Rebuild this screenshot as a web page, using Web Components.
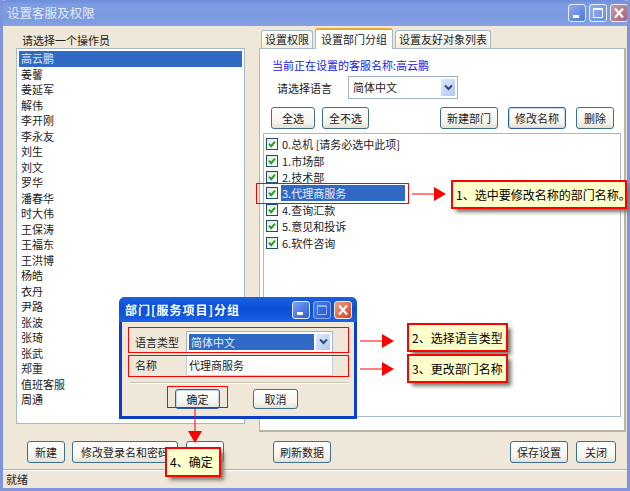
<!DOCTYPE html>
<html lang="zh">
<head>
<meta charset="utf-8">
<title>设置客服及权限</title>
<style>
  html, body { margin: 0; padding: 0; background: #efe7d8; }
  body { font: 11px/16px "Noto Sans CJK SC", "Liberation Sans", sans-serif; color: #222; }
</style>
</head>
<body>
<template id="caption-tpl">
  <style>
    :host { display: flex; align-items: center; box-sizing: border-box; height: 26px; }
    .title { flex: 1; white-space: nowrap; }
    .btns { display: flex; gap: 3px; }
    .b { box-sizing: border-box; width: 18px; height: 18px; border: 1px solid #e8eefb; border-radius: 3px; position: relative; display: block; }
    svg { display: block; width: 16px; height: 16px; }
  </style>
  <span class="title"><slot></slot></span>
  <span class="btns">
    <span class="b min"><svg viewBox="0 0 16 16"><rect x="4" y="10" width="6" height="3" fill="#fff"/></svg></span>
    <span class="b max"><svg viewBox="0 0 16 16"><path d="M3.5 3.5h9v9h-9zM3.5 4.5h9" fill="none" stroke="#fff" stroke-width="1"/></svg></span>
    <span class="b close"><svg viewBox="0 0 16 16"><path d="M4 3.5l8 9M12 3.5l-8 9" fill="none" stroke="#fff" stroke-width="2.2"/></svg></span>
  </span>
</template>

<script>
const define = (name, html) => {
  customElements.define(name, class extends HTMLElement {
    constructor() {
      super();
      this.attachShadow({ mode: 'open' }).innerHTML = html;
    }
  });
};

customElements.define('xp-caption', class extends HTMLElement {
  constructor() {
    super();
    this.attachShadow({ mode: 'open' });
    this.shadowRoot.appendChild(document.getElementById('caption-tpl').content.cloneNode(true));
  }
  connectedCallback() {
    const s = document.createElement('style');
    const small = this.hasAttribute('dialog');
    s.textContent = small
      ? `:host{background:linear-gradient(#1a5fe0,#0a4fd4 50%,#1c62e4);color:#fff;font-weight:bold;font-size:12px;letter-spacing:1px;padding:0 5px 0 6px;height:25px}
         .b{background:linear-gradient(135deg,#7fa2ee,#2a5bd8)}
         .max{opacity:.55}
         .close{background:linear-gradient(135deg,#f0a080,#d8401c)}`
      : `:host{background:linear-gradient(#6e8edc,#7f9de3 20%,#7c9ae0 70%,#86a1e4);color:#e4eaf7;font-size:12.5px;padding:0 2px 0 7px}
         .b{background:linear-gradient(135deg,#8fa9ec,#4f78d8)}
         .max{background:linear-gradient(135deg,#93abea,#6d8fe0)}
         .close{background:linear-gradient(135deg,#c79aa8,#a8607a)}`;
    this.shadowRoot.appendChild(s);
  }
});

define('xp-button', `
  <style>
    :host { display: inline-flex; align-items: center; justify-content: center; box-sizing: border-box; height: 22px;
      border: 1px solid #3f6f8f; border-radius: 3px; background: linear-gradient(#fff, #f6f4ee 70%, #e4e0d2);
      color: #222; white-space: nowrap; flex: none; }
    :host([focus]) { border-color: #2f5f9f; box-shadow: inset 0 0 0 1px #c5d6f0; }
  </style><slot></slot>`);

define('xp-listbox', `
  <style>
    :host { display: block; box-sizing: border-box; background: #fff; border: 1px solid #a5b9cc; padding: 2px 2px; }
    ::slotted(div) { height: 15.5px; line-height: 15.5px; padding-left: 2px; white-space: nowrap; }
    ::slotted(.sel) { background: #316ac5; color: #dfe8f8; }
  </style><slot></slot>`);

define('xp-check', `
  <style>
    :host { display: flex; align-items: center; height: 16.4px; white-space: nowrap; }
    .box { box-sizing: border-box; width: 12px; height: 12px; border: 1px solid #1f4f70; background: linear-gradient(135deg,#e6e6de,#fff); flex: none; margin-right: 3px; }
    svg { display: block; width: 10px; height: 10px; }
    .t { padding: 0 1px; }
    :host([sel]) .t { background: #316ac5; color: #e6eefa; width: 122px; height: 16px; line-height: 16px; }
  </style>
  <span class="box"><svg viewBox="0 0 10 10"><path d="M2 4.8l2.2 2.4L8 2.6" fill="none" stroke="#21a121" stroke-width="2"/></svg></span>
  <span class="t"><slot></slot></span>`);

define('xp-combo', `
  <style>
    :host { display: flex; box-sizing: border-box; height: 23px; background: #fff; border: 1px solid #9fb4cc; padding: 2px; align-items: stretch; }
    .v { flex: 1; padding-left: 2px; line-height: 17px; white-space: nowrap; }
    :host([sel]) .v { background: #316ac5; color: #e6eefa; margin-right: 2px; }
    .a { width: 14px; background: linear-gradient(135deg,#dfe8fb,#b3c8f2); display: flex; align-items: center; justify-content: center; flex: none; }
    svg { width: 9px; height: 7px; display: block; }
  </style>
  <span class="v"><slot></slot></span>
  <span class="a"><svg viewBox="0 0 9 7"><path d="M1 1.5l3.5 3.5L8 1.5" fill="none" stroke="#2b4a80" stroke-width="2"/></svg></span>`);

define('xp-tab', `
  <style>
    :host { display: block; box-sizing: border-box; height: 18px; padding: 0 3px; line-height: 17px;
      background: linear-gradient(#fff, #f1efe4); border: 1px solid #a5b9cc; border-bottom: none; border-radius: 3px 3px 0 0; white-space: nowrap; }
    :host([active]) { height: 21px; margin-bottom: -1px; padding: 0 5px; line-height: 18px; background: #fff; border-top: 2px solid #f3a62c; position: relative; z-index: 1; }
  </style><slot></slot>`);

define('note-box', `
  <style>
    :host { position: absolute; box-sizing: border-box; background: #ffffcc; border: 1px solid #f00; outline: .5px solid #f00;
      box-shadow: 4px 4px 4px #77736a; color: #000; font-size: 12px; display: flex; align-items: center; padding-left: 3px; white-space: nowrap; z-index: 5; }
  </style><slot></slot>`);

define('red-frame', `
  <style>:host { position: absolute; box-sizing: border-box; border: 1px solid #f00; z-index: 4; pointer-events: none; }</style>`);

define('red-arrow', `
  <style>
    :host { position: absolute; display: block; z-index: 6; }
    svg { display: block; overflow: visible; }
  </style>
  <svg width="34" height="14" viewBox="0 0 34 14"><path d="M0 7h23" stroke="#f00" stroke-width="1"/><path d="M22 0l12 7-12 7z" fill="#f00"/></svg>`);

define('red-arrow-down', `
  <style>
    :host { position: absolute; display: block; z-index: 6; }
    svg { display: block; overflow: visible; }
  </style>
  <svg width="14" height="35" viewBox="0 0 14 35"><path d="M7 0v24" stroke="#f00" stroke-width="1"/><path d="M0 23h14l-7 12z" fill="#f00"/></svg>`);

define('service-dialog', `
  <style>
    :host { position: absolute; left: 119px; top: 297px; width: 238px; height: 122px; box-sizing: border-box; z-index: 3;
      background: #efe7d8; border: 3px solid #0a3fc4; border-top: none; border-radius: 6px 6px 0 0; display: flex; flex-direction: column; }
    .body { flex: 1; padding: 8px 6px 0 13px; }
    .row { display: flex; align-items: center; height: 23px; }
    .row + .row { margin-top: 1px; height: 22px; }
    label { width: 51px; flex: none; }
    xp-combo, .input { width: 147px; flex: none; box-sizing: border-box; }
    xp-combo { height: 22px; }
    .input { height: 21px; background: #fff; border: 1px solid #c3d0e0; padding-left: 2px; line-height: 19px; }
    hr { border: none; border-top: 1px solid #c8c2b2; border-bottom: 1px solid #fff; margin: 6px 0 5px -5px; }
    .actions { display: flex; padding-left: 40px; gap: 33px; }
    xp-button { width: 45px; height: 20px; }
    xp-caption { margin: 0 -3px; border-radius: 6px 6px 0 0; }
  </style>
  <xp-caption dialog>部门[服务项目]分组</xp-caption>
  <div class="body">
    <div class="row"><label>语言类型</label><xp-combo sel>简体中文</xp-combo></div>
    <div class="row"><label>名称</label><div class="input">代理商服务</div></div>
    <hr>
    <div class="actions"><xp-button focus>确定</xp-button><xp-button>取消</xp-button></div>
  </div>`);

define('dept-panel', `
  <style>
    :host { display: block; box-sizing: border-box; height: 384px; background: #fff; border: 1px solid #a5b9cc;
      border-right: 2px solid #b8b4a6; border-bottom: 2px solid #b8b4a6; padding: 8px 3px 0 3px; }
    .who { color: #2020e8; padding-left: 9px; height: 16px; white-space: nowrap; }
    .lang { display: flex; align-items: center; padding-left: 14px; margin-top: 3px; height: 23px; }
    .lang span { width: 71px; }
    xp-combo { width: 110px; }
    .btns { display: flex; margin-top: 8px; padding-left: 8px; height: 22px; }
    .list { height: 284px; box-sizing: border-box; margin-top: 4px; border: 1px solid #a5b9cc; padding: 2px 0 0 2px; }
  </style>
  <div class="who">当前正在设置的客服名称:高云鹏</div>
  <div class="lang"><span>请选择语言</span><xp-combo>简体中文</xp-combo></div>
  <div class="btns">
    <xp-button style="width:44px">全选</xp-button>
    <xp-button style="width:47px;margin-left:7px">全不选</xp-button>
    <xp-button style="width:58px;margin-left:71px">新建部门</xp-button>
    <xp-button focus style="width:58px;margin-left:10px">修改名称</xp-button>
    <xp-button style="width:38px;margin-left:10px">删除</xp-button>
  </div>
  <div class="list">
    <xp-check>0.总机 [请务必选中此项]</xp-check>
    <xp-check>1.市场部</xp-check>
    <xp-check>2.技术部</xp-check>
    <xp-check sel>3.代理商服务</xp-check>
    <xp-check>4.查询汇款</xp-check>
    <xp-check>5.意见和投诉</xp-check>
    <xp-check>6.软件咨询</xp-check>
  </div>`);

define('staff-window', `
  <style>
    :host { display: flex; flex-direction: column; position: relative; box-sizing: border-box; width: 630px; height: 491px; overflow: hidden;
      background: #efe7d8; border: 3px solid #8094dc; border-top: none; }
    xp-caption { margin: 0 -3px; border-radius: 6px 6px 0 0; }
    .main { display: flex; padding: 2px 0 0 13px; gap: 14px; }
    .left { width: 229px; flex: none; }
    .left .cap { height: 20px; line-height: 24px; padding-left: 6px; white-space: nowrap; }
    .left xp-listbox { height: 376px; }
    .right { width: 367px; flex: none; }
    .tabs { display: flex; gap: 2px; padding-left: 2px; height: 20px; align-items: flex-end; }
    .foot { display: flex; margin-top: 9px; height: 22px; padding-left: 24px; }
    .status { margin-top: 6px; height: 19px; flex: none; border-top: 1px solid #b5b1a3; line-height: 19px; padding-left: 3px; box-sizing: border-box; box-shadow: inset 0 1px 0 #fff; }
  </style>
  <xp-caption>设置客服及权限</xp-caption>
  <div class="main">
    <div class="left">
      <div class="cap">请选择一个操作员</div>
      <xp-listbox>
        <div class="sel">高云鹏</div><div>姜馨</div><div>姜延军</div><div>解伟</div><div>李开刚</div><div>李永友</div>
        <div>刘生</div><div>刘文</div><div>罗华</div><div>潘春华</div><div>时大伟</div><div>王保涛</div><div>王福东</div>
        <div>王洪博</div><div>杨皓</div><div>衣丹</div><div>尹路</div><div>张波</div><div>张琦</div><div>张武</div><div>郑重</div>
        <div>值班客服</div><div>周通</div>
      </xp-listbox>
    </div>
    <div class="right">
      <div class="tabs">
        <xp-tab>设置权限</xp-tab><xp-tab active>设置部门分组</xp-tab><xp-tab>设置友好对象列表</xp-tab>
      </div>
      <dept-panel></dept-panel>
    </div>
  </div>
  <div class="foot">
    <xp-button style="width:38px">新建</xp-button>
    <xp-button style="width:106px;margin-left:7px">修改登录名和密码</xp-button>
    <xp-button style="width:38px;margin-left:8px">删除</xp-button>
    <xp-button style="width:58px;margin-left:49px">刷新数据</xp-button>
    <xp-button style="width:58px;margin-left:179px">保存设置</xp-button>
    <xp-button style="width:40px;margin-left:8px">关闭</xp-button>
  </div>
  <div class="status">就绪</div>
`);
</script>

<div style="position:relative;width:630px;height:491px">
  <staff-window></staff-window>
  <service-dialog></service-dialog>

  <red-frame style="left:256px;top:183px;width:153px;height:21px"></red-frame>
  <red-arrow style="left:412px;top:187px"></red-arrow>
  <note-box style="left:452px;top:181px;width:174px;height:27px">1、选中要修改名称的部门名称。</note-box>

  <red-frame style="left:128px;top:327px;width:221px;height:26px"></red-frame>
  <red-frame style="left:128px;top:355px;width:221px;height:22px"></red-frame>
  <red-frame style="left:167px;top:386px;width:61px;height:22px"></red-frame>

  <red-arrow style="left:360px;top:334px"></red-arrow>
  <note-box style="left:408px;top:324px;width:99px;height:27px">2、选择语言类型</note-box>
  <red-arrow style="left:360px;top:362px"></red-arrow>
  <note-box style="left:408px;top:355px;width:99px;height:27px">3、更改部门名称</note-box>

  <red-arrow-down style="left:188px;top:408px"></red-arrow-down>
  <note-box style="left:166px;top:448px;width:54px;height:28px">4、确定</note-box>
</div>
</body>
</html>
